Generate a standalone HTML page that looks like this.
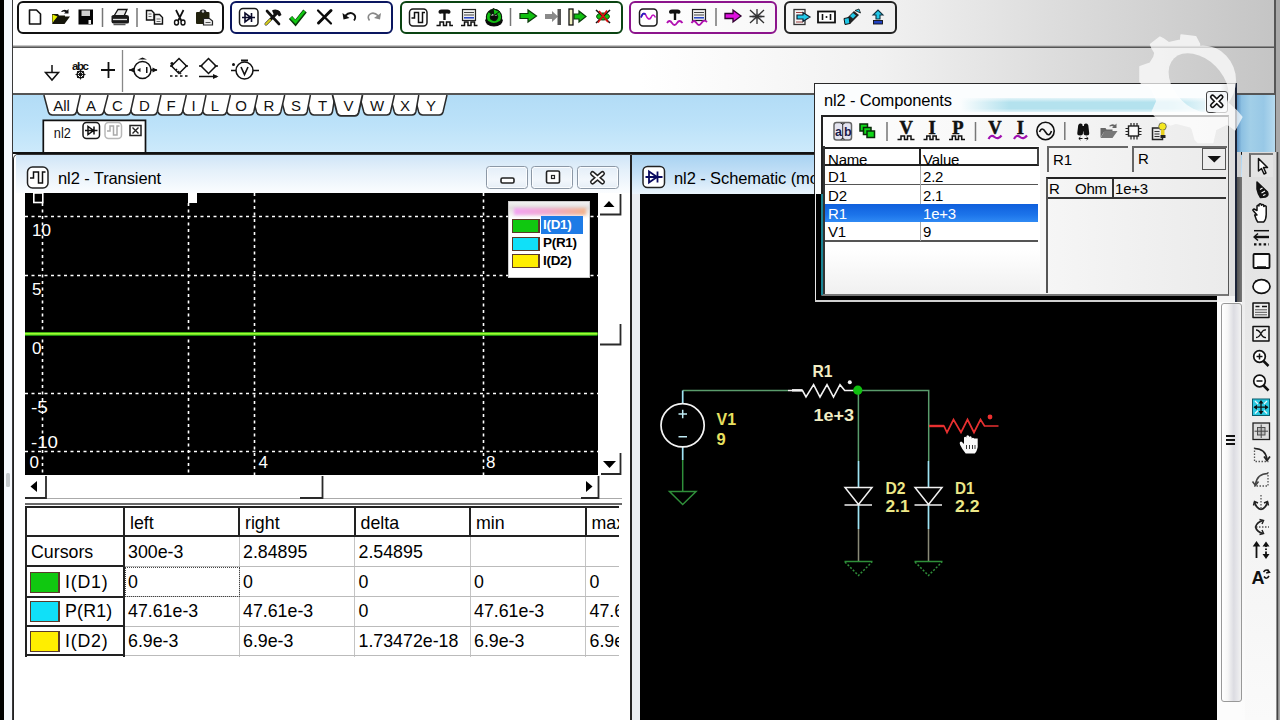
<!DOCTYPE html>
<html>
<head>
<meta charset="utf-8">
<title>nl2</title>
<style>
*{box-sizing:border-box;margin:0;padding:0}
html,body{width:1280px;height:720px;overflow:hidden;background:#fff}
body{position:relative;font-family:"Liberation Sans",sans-serif;color:#000}
.a{position:absolute}
.t{position:absolute;white-space:nowrap;line-height:1}
.tbx{position:absolute;top:1px;height:33px;border:2px solid #111;border-radius:6px;background:transparent}
svg{position:absolute;left:0;top:0;overflow:visible}

.wb{top:165.500px;width:42px;height:23.500px;border:1.300px solid #8c98a6;border-radius:3.500px;background:linear-gradient(to bottom,#e4eef8,#f2f7fc 60%,#e6eef6);box-shadow:inset 0 0 0 1px rgba(255,255,255,0.8)}
.sbb{background:#fff;border-right:2px solid #333;border-bottom:2px solid #333}
.sw{width:28px;height:14px;border:1px solid #5a3a2a;border-right-width:2px}
.lg{font-size:13.500px;font-weight:bold;letter-spacing:-0.3px}
.tc{font-size:17.8px}
.cl{font-size:15px;letter-spacing:-0.2px}
</style>
</head>
<body>
<!-- ===== top chrome backgrounds ===== -->
<div class="a" style="left:0;top:0;width:1280px;height:153px;background:linear-gradient(to right,#fff 0,#fff 640px,#f1f1f1 880px,#dcdcdc 1060px,#c4c4c4 1280px)"></div>
<!-- separator between toolbars -->
<div class="a" style="left:12px;top:44.500px;width:1264px;height:3.500px;background:linear-gradient(to bottom,#e0e0e0,#9a9a9a 45%,#3a3a3a 75%,#8a8a8a)"></div>
<!-- tab strip -->
<div class="a" id="tabstrip" style="left:13px;top:95px;width:1262px;height:58px;background:linear-gradient(to bottom,#b2dcf6,#bce2f9 50%,#cdeafb)"></div>
<div class="a" style="left:12px;top:93px;width:1264px;height:2px;background:#555"></div>
<div class="a" style="left:12px;top:151.500px;width:1264px;height:2.500px;background:#111"></div>
<!-- left edge -->
<div class="a" style="left:0;top:0;width:3.500px;height:720px;background:#000"></div>
<div class="a" style="left:3.500px;top:0;width:8.500px;height:720px;background:#f6f9fd"></div>
<div class="a" style="left:11.500px;top:0;width:1.800px;height:720px;background:#3a3a3a"></div>
<div class="a" style="left:6px;top:473px;width:3.500px;height:14px;background:#c4c8cc;border-radius:1.500px"></div>
<!-- right edge -->
<div class="a" style="left:1274px;top:0;width:2px;height:155px;background:#555"></div>
<div class="a" style="left:1276px;top:0;width:4px;height:720px;background:#a8a8a8"></div>

<!-- ===== toolbar boxes ===== -->
<div class="tbx" style="left:17px;width:207px"></div>
<div class="tbx" style="left:230px;width:163px;border-color:#0a1660"></div>
<div class="tbx" style="left:400px;width:223px;border-color:#0a4412"></div>
<div class="tbx" style="left:629px;width:148px;border-color:#8c148c"></div>
<div class="tbx" style="left:784px;width:113px;border-color:#222"></div>


<!-- ===== top toolbar icons ===== -->
<svg width="1280" height="720" viewBox="0 0 1280 720">
<g fill="none" stroke="#777" stroke-width="1.500"><path d="M102.500 8V27M137 8V27M510.500 8V26M716 8V26"/></g>
<!-- new -->
<path d="M29.500 10h7l4 4v10h-11z" fill="#fff" stroke="#111" stroke-width="1.600" stroke-linejoin="round"/>
<!-- open -->
<path d="M52 14h6l1 1.500h6v3h-10l-3 5z" fill="#1a1a08"/>
<path d="M52 24l4-7.500h14l-5.500 7.500z" fill="#15150a"/>
<path d="M52.500 14.500l0 8 5-6z" fill="#e8f000"/>
<path d="M61 11.500q3-3 6-1l1.500-1.500v4.500h-4.500l1.500-1.500q-2-1-3.500 0z" fill="#111"/>
<!-- save -->
<rect x="78.500" y="9.500" width="14.500" height="15" fill="#050505"/>
<rect x="81.500" y="10.500" width="8.500" height="5.500" fill="#cfcfcf"/>
<rect x="88.500" y="20" width="2.500" height="4" fill="#eee"/>
<!-- print -->
<path d="M114 16l4-6.500h9l-3 6.500z" fill="#e8e8e8" stroke="#111" stroke-width="1.300"/>
<path d="M111.500 16.500q0-1.500 2-1.500h13q2.500 0 2.500 2v5q0 1.500-2 1.500h-13.500q-2 0-2-2z" fill="#1a1a1a"/>
<path d="M113 19.500h14" stroke="#ddd" stroke-width="1.300"/>
<path d="M113.500 24.500h12" stroke="#555" stroke-width="1.500"/>
<!-- copy -->
<path d="M146.500 10.500h5l2.500 2.500v7h-7.500z" fill="#f4f4f4" stroke="#111" stroke-width="1.400"/>
<path d="M154.500 14.500h5l3 3v6.500h-8z" fill="#f4f4f4" stroke="#111" stroke-width="1.400"/>
<path d="M148.500 14h3M148.500 16.500h3M156.500 19h4M156.500 21.500h4" stroke="#666" stroke-width="1"/>
<!-- cut -->
<path d="M176 10l5.500 11M183.500 10l-5.500 11" stroke="#111" stroke-width="1.700" fill="none"/>
<ellipse cx="176.500" cy="22.500" rx="2" ry="2.500" fill="#fff" stroke="#111" stroke-width="1.400"/>
<ellipse cx="183" cy="22.500" rx="2" ry="2.500" fill="#fff" stroke="#111" stroke-width="1.400"/>
<!-- paste -->
<rect x="196" y="12" width="13.500" height="12" rx="1" fill="#22220e"/>
<path d="M199.500 12.500q0-3 3.500-3t3.500 3z" fill="#222"/>
<circle cx="203" cy="11.500" r="1.200" fill="#ccc"/>
<path d="M203.500 18.500h6l3 2.500v4h-9z" fill="#eee" stroke="#222" stroke-width="1.200"/>
<path d="M205.500 22.500h5" stroke="#555" stroke-width="1"/>

<!-- box2: diode -->
<rect x="239.500" y="8.500" width="18.500" height="17.500" rx="3.500" fill="#fff" stroke="#1a1a1a" stroke-width="1.500"/>
<path d="M242 17.500h13M245 13v9l6-4.500zM251.500 13v9" fill="none" stroke="#0a0a2a" stroke-width="1.600"/>
<!-- tools -->
<path d="M266 24l12-12" stroke="#111" stroke-width="3" stroke-linecap="round"/>
<path d="M266 24l4-4" stroke="#d8d020" stroke-width="2" stroke-linecap="round"/>
<path d="M267 11l12 13" stroke="#111" stroke-width="2.600" stroke-linecap="round"/>
<path d="M272 10.500q4-2.500 8 1l1.500 3.500-2.500 1.500-2-2.500-3 1z" fill="#111"/>
<!-- check -->
<path d="M290.500 17.500l5 5.500 9.500-12" fill="none" stroke="#0a3a0a" stroke-width="4.500" stroke-linejoin="miter"/>
<path d="M291 17.500l4.500 4.500 9-11" fill="none" stroke="#12c812" stroke-width="2.600"/>
<!-- X -->
<path d="M318 10.500l13 13" stroke="#0a0a0a" stroke-width="2.200" stroke-linecap="round"/>
<path d="M331 10.500l-12.500 12.500" stroke="#0a0a0a" stroke-width="3" stroke-linecap="round"/>
<!-- undo -->
<path d="M345 16q5-5 9-1.500 2.500 2.500 0 6" fill="none" stroke="#111" stroke-width="1.800"/>
<path d="M342.500 13l1 6.500 6-1.500z" fill="#111"/>
<!-- redo -->
<path d="M378.500 16q-5-5-9-1.500-2.500 2.500 0 6" fill="none" stroke="#888" stroke-width="1.600"/>
<path d="M381 13l-1 6.500-6-1.500z" fill="#888"/>

<!-- box3 -->
<rect x="409.500" y="9" width="17.500" height="17" rx="3.500" fill="#fff" stroke="#1a1a1a" stroke-width="1.500"/>
<path d="M411.500 18h3v-5.500h4v10h4v-10h2.500" fill="none" stroke="#111" stroke-width="1.500"/>
<!-- T wave -->
<path d="M438.500 12q0-2.500 3-2.500h6q3 0 3 2.500t-3 1.500h-6q-3 1-3-1.500z" fill="#111"/>
<path d="M444.500 12v8" stroke="#111" stroke-width="2.400"/>
<path d="M436.500 25.500h3.500v-3.500h3.500v3.500h3v-3.500h3.500v3.500h3" fill="none" stroke="#111" stroke-width="1.500"/>
<!-- list wave -->
<rect x="462.500" y="9.500" width="13" height="11" fill="#f0f0f0" stroke="#222" stroke-width="1.200"/>
<path d="M464 12.500h10M464 15h10" stroke="#444" stroke-width="1.100"/>
<path d="M464 17.800h10" stroke="#1030c0" stroke-width="1.400"/>
<path d="M461 25.500h3.500v-3.500h3.500v3.500h3v-3.500h3.500v3.500h3" fill="none" stroke="#111" stroke-width="1.500"/>
<!-- green cycle -->
<ellipse cx="494" cy="20.500" rx="8.800" ry="5.300" fill="#0a0a0a"/>
<circle cx="494" cy="17" r="5.600" fill="none" stroke="#0a1a0a" stroke-width="5.200"/>
<circle cx="494" cy="17" r="5.600" fill="none" stroke="#12c012" stroke-width="3" stroke-dasharray="27 8.200" transform="rotate(-60 494 17)"/>
<path d="M493 8.500l6.500 3-5.500 4z" fill="#12c012" stroke="#0a1a0a" stroke-width="1"/>
<path d="M487.500 22.500q6.500 4.500 13 0" fill="none" stroke="#0a0a0a" stroke-width="3.500"/>
<!-- green arrow -->
<path d="M520 13.500h8v-3.500l8.500 6-8.500 6v-3.500h-8z" fill="#10c010" stroke="#0a3a0a" stroke-width="1.200"/>
<!-- gray arrow + bar -->
<path d="M545 14h7v-3l6 5.500-6 5.500v-3h-7z" fill="#8a8a8a"/>
<rect x="557.500" y="9" width="3.500" height="16" fill="#555"/>
<!-- bar + green arrow -->
<rect x="569" y="9" width="4" height="16" fill="#f0f0c0" stroke="#111" stroke-width="1.300"/>
<path d="M574 14h5v-3l7 5.500-7 5.500v-3h-5z" fill="#10c010" stroke="#0a3a0a" stroke-width="1.200"/>
<!-- bug red x -->
<ellipse cx="603" cy="16.500" rx="6.500" ry="3.500" fill="#10c010" stroke="#0a3a0a" stroke-width="1"/>
<path d="M596 10l14 13M610 10l-14 13" stroke="#111" stroke-width="1.600"/>
<path d="M599 11l9 11" stroke="#e01010" stroke-width="1.800"/>
<path d="M607 10.500l-9 12" stroke="#e01010" stroke-width="1.500"/>

<!-- box4 -->
<rect x="639.500" y="9" width="17.500" height="17" rx="3.500" fill="#fff" stroke="#1a1a1a" stroke-width="1.500"/>
<path d="M641 17.500q2-6 4.500-3 3 7 5.500 3 2-5 4.500 0" fill="none" stroke="#c010c0" stroke-width="1.600"/>
<path d="M641 17.500q2-6 4.500-3" fill="none" stroke="#2020c0" stroke-width="1.600"/>
<path d="M669 12q0-2.500 3-2.500h5.500q3 0 3 2.500t-3 1.500h-5.500q-3 1-3-1.500z" fill="#111"/>
<path d="M675 12v8" stroke="#111" stroke-width="2.400"/>
<path d="M667 23q2.500-4 5 0t5 0 5.500 0" fill="none" stroke="#b010b0" stroke-width="1.800"/>
<rect x="692.500" y="9.500" width="13" height="11" fill="#f0f0f0" stroke="#222" stroke-width="1.200"/>
<path d="M694 12.500h10M694 15h10" stroke="#444" stroke-width="1.100"/>
<path d="M694 17.800h10" stroke="#1030c0" stroke-width="1.400"/>
<path d="M691.500 23q2.500-4 5 0t5 0 5.500-1" fill="none" stroke="#b010b0" stroke-width="1.800"/>
<path d="M725 13.500h8v-3.500l8 6-8 6v-3.500h-8z" fill="#e010e0" stroke="#300030" stroke-width="1.300"/>
<ellipse cx="757" cy="16.500" rx="5" ry="3" fill="#b0b0b8"/>
<path d="M750 10l14 13M764 10l-14 13M757 9v15M749.500 16.500h15" stroke="#333" stroke-width="1.300"/>

<!-- box5 -->
<rect x="794" y="9.500" width="11" height="15" fill="#f4f4f4" stroke="#333" stroke-width="1.300"/>
<path d="M796 12.500h7M796 22h7" stroke="#a04040" stroke-width="1"/>
<path d="M797 15h6v-2.500l7 4.500-7 4.500v-2.500h-6z" fill="#20c8e8" stroke="#102030" stroke-width="1.200"/>
<rect x="818" y="11.500" width="17" height="11" fill="#fff" stroke="#111" stroke-width="1.800"/>
<path d="M822.500 14v6M830.500 14v6" stroke="#111" stroke-width="1.600"/>
<circle cx="826.500" cy="17" r="1" fill="#111"/>
<path d="M845 20l9-9 5 4-9 9z" fill="#222"/>
<path d="M844 18.500l5-1 1 6-5 1z" fill="#20c8e8" stroke="#111" stroke-width="1"/>
<path d="M850 16l3-3 3 2.500-3 3z" fill="#20c8e8"/>
<path d="M855 10.500l4-1.500 1.500 4z" fill="#20c8e8" stroke="#111" stroke-width="0.800"/>
<path d="M873 14h3v-4h4v4h3l-5 5z" fill="#20c8e8" stroke="#103040" stroke-width="1.100" transform="rotate(180 878 14.500)"/>
<rect x="873.500" y="20.500" width="9" height="3.500" fill="#2040c0" stroke="#111" stroke-width="0.900"/>
</svg>
<!-- tabs -->
<svg width="1280" height="720" viewBox="0 0 1280 720">
<path d="M414.2 95L418.7 112Q419.7 115 422.7 115L439.2 115Q442.2 115 443.0 112L447.0 95" fill="#fff" stroke="#2a2a2a" stroke-width="1.5"/>
<path d="M389.8 95L394.3 112Q395.3 115 398.3 115L412.0 115Q415.0 115 415.8 112L418.8 95" fill="#fff" stroke="#2a2a2a" stroke-width="1.5"/>
<path d="M359.3 95L363.8 112Q364.8 115 367.8 115L386.7 115Q389.7 115 390.5 112L394.4 95" fill="#fff" stroke="#2a2a2a" stroke-width="1.5"/>
<path d="M305.5 95L310.0 112Q311.0 115 314.0 115L328.6 115Q331.6 115 332.4 112L335.0 95" fill="#fff" stroke="#2a2a2a" stroke-width="1.5"/>
<path d="M280.1 95L284.6 112Q285.6 115 288.6 115L303.3 115Q306.3 115 307.1 112L310.4 95" fill="#fff" stroke="#2a2a2a" stroke-width="1.5"/>
<path d="M252.0 95L256.5 112Q257.5 115 260.5 115L277.0 115Q280.0 115 280.8 112L284.7 95" fill="#fff" stroke="#2a2a2a" stroke-width="1.5"/>
<path d="M222.5 95L227.0 112Q228.0 115 231.0 115L250.0 115Q253.0 115 253.8 112L257.5 95" fill="#fff" stroke="#2a2a2a" stroke-width="1.5"/>
<path d="M198.5 95L203.0 112Q204.0 115 207.0 115L222.7 115Q225.7 115 226.5 112L230.4 95" fill="#fff" stroke="#2a2a2a" stroke-width="1.5"/>
<path d="M178.9 95L183.4 112Q184.4 115 187.4 115L198.7 115Q201.7 115 202.5 112L206.0 95" fill="#fff" stroke="#2a2a2a" stroke-width="1.5"/>
<path d="M153.5 95L158.0 112Q159.0 115 162.0 115L178.6 115Q181.6 115 182.4 112L186.3 95" fill="#fff" stroke="#2a2a2a" stroke-width="1.5"/>
<path d="M126.8 95L131.3 112Q132.3 115 135.3 115L153.3 115Q156.3 115 157.1 112L161.0 95" fill="#fff" stroke="#2a2a2a" stroke-width="1.5"/>
<path d="M100.1 95L104.6 112Q105.6 115 108.6 115L126.7 115Q129.7 115 130.5 112L134.3 95" fill="#fff" stroke="#2a2a2a" stroke-width="1.5"/>
<path d="M73.0 95L77.5 112Q78.5 115 81.5 115L99.8 115Q102.8 115 103.6 112L108.0 95" fill="#fff" stroke="#2a2a2a" stroke-width="1.5"/>
<path d="M43.9 95L48.4 112Q49.4 115 52.4 115L72.6 115Q75.6 115 76.4 112L80.3 95" fill="#fff" stroke="#2a2a2a" stroke-width="1.5"/>
<path d="M332.5 95L337.0 112.8Q338.0 115.8 341.0 115.8L354.8 115.8Q357.8 115.8 358.6 112.8L362.5 95" fill="#fff" stroke="#2a2a2a" stroke-width="1.8"/>
<g font-family="Liberation Sans, sans-serif" style="font-size:15px" text-anchor="middle" fill="#111">
<text x="61.5" y="111">All</text><text x="91" y="111">A</text><text x="117.5" y="111">C</text><text x="144.5" y="111">D</text><text x="171" y="111">F</text><text x="193.5" y="111">I</text><text x="215" y="111">L</text><text x="241" y="111">O</text><text x="269" y="111">R</text><text x="296" y="111">S</text><text x="322.5" y="111">T</text><text x="348.5" y="111">V</text><text x="377" y="111">W</text><text x="405" y="111">X</text><text x="431" y="111">Y</text>
</g>
<path d="M43.300 152V120.300H145.500V152" fill="#fff" stroke="#111" stroke-width="1.700"/>
<text x="53.800" y="138" font-family="Liberation Sans, sans-serif" style="font-size:15px" fill="#111" textLength="17" lengthAdjust="spacingAndGlyphs">nl2</text>
<rect x="83" y="122.500" width="16.500" height="16" rx="3.500" fill="#fff" stroke="#1a1a1a" stroke-width="1.500"/>
<path d="M85 130.500h12.500M88 126.500v8l5.500-4zM94 126.500v8" fill="none" stroke="#111" stroke-width="1.500"/>
<rect x="105" y="122.500" width="16.500" height="16" rx="3.500" fill="#fff" stroke="#b8b8b8" stroke-width="1.500"/>
<path d="M107 131h3v-5h3.500v9h3.500v-9h2.500" fill="none" stroke="#aaa" stroke-width="1.500"/>
<rect x="130" y="125.500" width="11" height="10" fill="#fff" stroke="#222" stroke-width="1.500"/>
<path d="M132.500 127.500l6 6M138.500 127.500l-6 6" stroke="#222" stroke-width="1.400"/>
<!-- toolbar 2 -->
<path d="M122.500 50V92" stroke="#888" stroke-width="1.300"/>
<g fill="none" stroke="#111" stroke-width="1.500">
<path d="M52 65v7.500M45.500 72.500h13l-6.500 7.500z" fill="#fff"/>
<path d="M101 70h14M108.500 62v16" stroke-width="1.800"/>
<circle cx="142.500" cy="70" r="8.500" fill="#fff"/>
<path d="M129 70h5M151 70h6"/>
<path d="M179 58.500l7.500 7.500-7.500 7.500-7.500-7.500z" fill="#fff"/>
<path d="M170 66h3M185 66h3"/>
<path d="M170 76h18" stroke-dasharray="2.500 2.500"/>
<path d="M176 69l5 5" stroke-dasharray="1.500 1.500"/>
<path d="M208.500 58.500l7.500 7.500-7.500 7.500-7.500-7.500z" fill="#fff"/>
<path d="M199 66h3.500M214.500 66h3.500"/>
<path d="M199 76.500h18"/>
<circle cx="244.500" cy="70.500" r="8.500" fill="#fff"/>
<path d="M231 70.500h5M253 70.500h6"/>
<path d="M241 67l3.500 7.500 3.500-7.500" stroke-width="1.600"/>
<path d="M241 60.500h7" stroke-width="2"/>
</g>
<g fill="#111">
<path d="M129 70l5-2.500v5zM157.500 70l-5-2.500v5z"/>
<path d="M137 70l3.500-2v4z"/><rect x="146" y="67" width="1.500" height="6"/>
<circle cx="172" cy="63.500" r="1.600"/><circle cx="233.500" cy="64.500" r="1.500"/>
<path d="M218.500 76.500l-5.500-2.500v5z"/>
<path d="M138 59.500l4.500-2 4.500 2z" />
</g>
<text x="72" y="70" font-family="Liberation Sans, sans-serif" style="font-size:11.500px;font-weight:bold" fill="#111" textLength="17">abc</text>
<circle cx="80.500" cy="74.500" r="3.300" fill="#fff" stroke="#111" stroke-width="1.400"/>
<circle cx="80.500" cy="74.500" r="1.200" fill="#111"/>
<path d="M80.500 69.500v10M75.500 74.500h10M77 71l7 7M84 71l-7 7" stroke="#111" stroke-width="0.900"/>
</svg>
<!-- MDI area placeholder -->
<div class="a" id="mdi" style="left:14px;top:154px;width:1262px;height:566px;background:#fff"></div>


<!-- ===== Transient window ===== -->
<div class="a" style="left:13px;top:154px;width:619px;height:566px;background:#fff;border-left:1.800px solid #222;border-right:2px solid #222;border-top:1px solid #333;border-top-left-radius:5px"></div>
<div class="a" style="left:16px;top:155px;width:614px;height:38px;background:linear-gradient(to bottom,#cfe5f7 0,#e4f0fa 40%,#fbfdff 100%)"></div>
<div class="t" style="left:58px;top:170px;font-size:16.500px;letter-spacing:-0.1px">nl2 - Transient</div>
<!-- window buttons -->
<div class="a wb" style="left:486px"></div><div class="a wb" style="left:531px"></div><div class="a wb" style="left:577px"></div>
<!-- plot -->
<div class="a" style="left:25px;top:193px;width:573px;height:282px;background:#000"></div>
<!-- vscroll -->
<div class="a" style="left:598px;top:193px;width:24px;height:282px;background:#fff"></div>
<!-- hscroll -->
<div class="a" style="left:25px;top:498px;width:597px;height:1px;background:#aaa"></div>
<div class="a" style="left:25px;top:503px;width:597px;height:1.500px;background:#6a6a6a"></div>
<!-- table -->
<div class="a" id="tbl" style="left:25px;top:506px;width:594px;height:151px;overflow:hidden">

<div class="a" style="left:0;top:0;width:594px;height:2px;background:#222"></div>
<div class="a" style="left:0;top:0;width:2px;height:151px;background:#222"></div>
<div class="a" style="left:0;top:29px;width:594px;height:2px;background:#222"></div>
<div class="a" style="left:98px;top:0;width:2px;height:151px;background:#222"></div>
<div class="a" style="left:213px;top:0;width:2px;height:31px;background:#222"></div>
<div class="a" style="left:329px;top:0;width:2px;height:31px;background:#222"></div>
<div class="a" style="left:444px;top:0;width:2px;height:31px;background:#222"></div>
<div class="a" style="left:560px;top:0;width:2px;height:31px;background:#222"></div>
<div class="a" style="left:214px;top:31px;width:1px;height:120px;background:#c4c4c4"></div>
<div class="a" style="left:329px;top:31px;width:1px;height:120px;background:#c4c4c4"></div>
<div class="a" style="left:445px;top:31px;width:1px;height:120px;background:#c4c4c4"></div>
<div class="a" style="left:560px;top:31px;width:1px;height:120px;background:#c4c4c4"></div>
<div class="a" style="left:100px;top:60px;width:494px;height:1px;background:#bbb"></div>
<div class="a" style="left:100px;top:90px;width:494px;height:1px;background:#bbb"></div>
<div class="a" style="left:100px;top:120px;width:494px;height:1px;background:#bbb"></div>
<div class="a" style="left:100px;top:149px;width:494px;height:1px;background:#bbb"></div>
<div class="a" style="left:0;top:59px;width:100px;height:2px;background:#222"></div>
<div class="a" style="left:0;top:90px;width:100px;height:2px;background:#222"></div>
<div class="a" style="left:0;top:119px;width:100px;height:2px;background:#222"></div>
<div class="a" style="left:0;top:148px;width:100px;height:2px;background:#222"></div>
<div class="a" style="left:100px;top:61px;width:115px;height:30px;border:1px dotted #444"></div>
<div class="t tc" style="left:105px;top:8.5px">left</div>
<div class="t tc" style="left:220px;top:8.5px">right</div>
<div class="t tc" style="left:335.5px;top:8.5px">delta</div>
<div class="t tc" style="left:451px;top:8.5px">min</div>
<div class="t tc" style="left:566.5px;top:8.5px">max</div>
<div class="t tc" style="left:6px;top:38px">Cursors</div>
<div class="t tc" style="left:103px;top:38px">300e-3</div>
<div class="t tc" style="left:218px;top:38px">2.84895</div>
<div class="t tc" style="left:333.5px;top:38px">2.54895</div>
<div class="a" style="left:5px;top:66px;width:30px;height:21px;background:#10c810;border:1px solid #5a3a2a;border-right-width:2px"></div>
<div class="t tc" style="left:40px;top:68px;letter-spacing:0.8px">I(D1)</div>
<div class="t tc" style="left:103px;top:68px">0</div>
<div class="t tc" style="left:218px;top:68px">0</div>
<div class="t tc" style="left:333.5px;top:68px">0</div>
<div class="t tc" style="left:449px;top:68px">0</div>
<div class="t tc" style="left:564.5px;top:68px">0</div>
<div class="a" style="left:5px;top:95px;width:30px;height:21px;background:#10e0f8;border:1px solid #5a3a2a;border-right-width:2px"></div>
<div class="t tc" style="left:40px;top:97px;letter-spacing:0.2px">P(R1)</div>
<div class="t tc" style="left:103px;top:97px">47.61e-3</div>
<div class="t tc" style="left:218px;top:97px">47.61e-3</div>
<div class="t tc" style="left:333.5px;top:97px">0</div>
<div class="t tc" style="left:449px;top:97px">47.61e-3</div>
<div class="t tc" style="left:564.5px;top:97px">47.61e-3</div>
<div class="a" style="left:5px;top:125px;width:30px;height:21px;background:#ffee00;border:1px solid #5a3a2a;border-right-width:2px"></div>
<div class="t tc" style="left:40px;top:127px;letter-spacing:0.8px">I(D2)</div>
<div class="t tc" style="left:103px;top:127px">6.9e-3</div>
<div class="t tc" style="left:218px;top:127px">6.9e-3</div>
<div class="t tc" style="left:333.5px;top:127px">1.73472e-18</div>
<div class="t tc" style="left:449px;top:127px">6.9e-3</div>
<div class="t tc" style="left:564.5px;top:127px">6.9e-3</div>
</div>

<!-- plot overlay -->
<svg width="1280" height="720" viewBox="0 0 1280 720">
<g stroke="#fff" stroke-width="1.6" stroke-dasharray="3 3.5" fill="none">
<path d="M25 216.5H598M25 275.5H598M25 393.5H598M25 451.5H598"/>
<path d="M42.5 203V475M188.5 203V475M254.5 193V475M483.5 193V475"/>
</g>
<path d="M25 334H597.500" stroke="#1c8c0c" stroke-width="4"/>
<path d="M25 333.8H597.500" stroke="#9cff30" stroke-width="2"/>
<rect x="33.8" y="193" width="9" height="9.5" fill="none" stroke="#fff" stroke-width="1.6"/>
<rect x="188" y="193" width="9" height="10" fill="#fff"/>
<g fill="#fff" font-family="Liberation Sans, sans-serif" font-size="17" style="font-size:17px">
<text x="32" y="236" textLength="19" lengthAdjust="spacingAndGlyphs">10</text>
<text x="32" y="295">5</text>
<text x="32" y="354">0</text>
<text x="31" y="413" textLength="17" lengthAdjust="spacingAndGlyphs">-5</text>
<text x="31" y="448" textLength="27" lengthAdjust="spacingAndGlyphs">-10</text>
<text x="29.5" y="468">0</text>
<text x="258.5" y="468">4</text>
<text x="486" y="468">8</text>
</g>
<!-- scrollbar 3d edges -->
<g fill="none" stroke="#2a2a2a" stroke-width="1.800">
<path d="M620.500 194V214.500H600"/>
<path d="M620.500 324V344.500H600"/>
<path d="M620.500 453V474H601"/>
<path d="M46 476V498H25"/>
<path d="M322.500 476V498H300"/>
<path d="M598.500 476V498H581"/>
</g>
<!-- scroll arrows -->
<path d="M603.500 207l5.500-6 5.500 6z" fill="#000"/>
<path d="M603 461h13l-6.5 7z" fill="#000"/>
<path d="M37 481v11l-6.5-5.5z" fill="#000"/>
<path d="M586 481v11l6.500-5.5z" fill="#000"/>
<!-- title icon transient -->
<rect x="27.5" y="167" width="20.500" height="21" rx="5" fill="#fff" stroke="#222" stroke-width="1.500"/>
<path d="M30 178h3.500v-6h5v11h4v-11h3" fill="none" stroke="#111" stroke-width="1.500"/>
<!-- window button glyphs -->
<rect x="501" y="178" width="13" height="5" rx="1.500" fill="#fff" stroke="#222" stroke-width="1.600"/>
<rect x="546.500" y="171" width="13" height="12" rx="1.500" fill="#fff" stroke="#222" stroke-width="1.600"/>
<rect x="551.500" y="175.500" width="3" height="3" fill="#fff" stroke="#222" stroke-width="1.200"/>
<path d="M592.500 173.500l10 8.500M602.500 173.500l-10 8.500" stroke="#222" stroke-width="5" stroke-linecap="round"/>
<path d="M592.500 173.500l10 8.500M602.500 173.500l-10 8.500" stroke="#fff" stroke-width="2" stroke-linecap="round"/>
</svg>
<!-- legend -->
<div class="a" style="left:507.500px;top:200.500px;width:82.500px;height:77.500px;background:linear-gradient(to bottom,#f2f2f2 0,#e2dede 6px,#fff 17px);border:1px solid #ccc"></div>
<div class="a" style="left:514px;top:208px;width:72px;height:7px;background:linear-gradient(to right,#f2a4f2,#f0a8d0 45%,#f2b48c);filter:blur(1.800px)"></div>
<div class="a" style="left:541px;top:216px;width:42px;height:18px;background:#1e7be6"></div>
<div class="a sw" style="left:512px;top:219px;background:#10c810"></div>
<div class="a sw" style="left:512px;top:237px;background:#10e0f8"></div>
<div class="a sw" style="left:512px;top:254px;background:#ffee00"></div>
<div class="t lg" style="left:543px;top:218px;color:#fff">I(D1)</div>
<div class="t lg" style="left:543px;top:236px">P(R1)</div>
<div class="t lg" style="left:543px;top:254px">I(D2)</div>

<!-- ===== Schematic window ===== -->
<div class="a" style="left:632px;top:154px;width:613px;height:566px;background:#e9edf1;border-top:1px solid #333"></div>
<div class="a" style="left:632px;top:155px;width:613px;height:39px;background:linear-gradient(to bottom,#a8d3f2 0,#c2dff6 45%,#eaf4fc 100%)"></div>
<div class="t" style="left:674px;top:170px;font-size:16.500px;letter-spacing:-0.1px">nl2 - Schematic (mo</div>
<div class="a" style="left:640px;top:194px;width:577px;height:526px;background:#000"></div>
<!-- schematic vscroll -->
<div class="a" style="left:1216.500px;top:194px;width:25px;height:526px;background:#fcfcfc"></div>
<div class="a" style="left:1220.500px;top:303px;width:21px;height:399px;border:1.500px solid #989898;border-radius:3px;background:linear-gradient(to right,#fff 0,#f6f6f6 30%,#dcdce2 62%,#e6e6ea 80%,#f2f2f2 100%)"></div>
<div class="a" style="left:1226px;top:435px;width:9px;height:2px;background:#111;box-shadow:0 4px 0 #111,0 8px 0 #111"></div>
<div class="a" style="left:1241.500px;top:152px;width:4px;height:568px;background:linear-gradient(to bottom,#dcdcdc 0,#efefef 30%,#fcfcfc 100%)"></div>
<!-- right toolbar -->
<div class="a" style="left:1245px;top:152px;width:31px;height:568px;background:linear-gradient(to bottom,#dcdcdc 0,#e6e6e6 25%,#f2f2f2 60%,#fafafa 100%)"></div>
<div class="a" style="left:1249px;top:153px;width:24px;height:24px;background:#e4e4e4;border-left:2px solid #666;border-top:2px solid #777"></div>
<svg width="1280" height="720" viewBox="0 0 1280 720">
<!-- title icon -->
<rect x="643" y="166.500" width="21.500" height="21" rx="4.500" fill="#fff" stroke="#222" stroke-width="1.500"/>
<path d="M645.500 177h17M649 171.500v11l8-5.500zM657.500 171.500v11" fill="none" stroke="#0a0a60" stroke-width="1.800"/>
<!-- circuit -->
<g fill="none" stroke-width="1.500" stroke-linecap="butt">
<path d="M682.700 390.500H788M858 390.500H928.700V461M858.400 394V461" stroke="#5a9c6c"/>
<path d="M682.700 460V491M669.500 491.500H696L682.700 504.500Z" stroke="#2f8f3a"/>
<path d="M858.500 529V561M928.500 529V561" stroke="#8a8a78"/>
<path d="M844.500 561.500H872.500M914.500 561.500H942.500" stroke="#2f8f3a"/>
<path d="M845 562L858.500 575.500L872 562M915 562L928.500 575.500L942 562" stroke="#2f8f3a" stroke-dasharray="2 1.700"/>
<path d="M682.700 390.500V404M682.700 447V460M858.500 461V487M858.500 505V529M928.500 461V487M928.500 505V529" stroke="#9fe4f4" stroke-width="1.700"/>
<circle cx="682.600" cy="425.300" r="21.600" stroke="#f4f4f4" stroke-width="1.700"/>
<path d="M678.500 414h8.500M682.700 409.700v8.600M678.500 436.800h8.500" stroke="#bfeaf4" stroke-width="1.500"/>
<path d="M788 390.500H802.500L806 397L813.600 384.700L820 397L827 384.700L833.500 397L840 384.700L844.700 390.500H854" stroke="#f2f2f2" stroke-width="1.600"/>
<path d="M792 390.300H802.500" stroke="#f2f2f2" stroke-width="2.400"/>
<path d="M845 487.500H872L858.500 504.500ZM844.500 505H872M915 487.500H942L928.500 504.500ZM914.500 505H942" stroke="#f0f0f0" stroke-width="1.500"/>
<path d="M929 426H944L947 432.500L953.500 419.500L961 432.500L967.500 419.500L974 432.500L980.500 419.500L984.500 426H998.500" stroke="#e83030" stroke-width="1.700"/>
<path d="M929 426H944" stroke="#e83030" stroke-width="2.400"/>
</g>
<circle cx="857.800" cy="390.200" r="4.600" fill="#10c010"/>
<circle cx="849.800" cy="382.300" r="2" fill="#f4f4f4"/>
<circle cx="990" cy="417" r="2.400" fill="#ec3030"/>
<g font-family="Liberation Sans, sans-serif" style="font-size:16.500px;font-weight:bold" fill="#ece888">
<text x="812.500" y="377" fill="#f2eec4" textLength="20" lengthAdjust="spacingAndGlyphs">R1</text>
<text x="813.500" y="421" fill="#f2eec4" textLength="40.500" lengthAdjust="spacingAndGlyphs">1e+3</text>
<text x="716.500" y="425" fill="#e8e060" textLength="19.500" lengthAdjust="spacingAndGlyphs">V1</text>
<text x="716.500" y="445" fill="#e8e060">9</text>
<text x="885.500" y="494" textLength="20" lengthAdjust="spacingAndGlyphs">D2</text>
<text x="885.500" y="512" textLength="24" lengthAdjust="spacingAndGlyphs">2.1</text>
<text x="955" y="494" textLength="19.500" lengthAdjust="spacingAndGlyphs">D1</text>
<text x="955" y="512" textLength="24.500" lengthAdjust="spacingAndGlyphs">2.2</text>
</g>
<!-- hand cursor -->
<path d="M961.500 441.500l2.500 2.500v-6.500q1.200-1.600 2.400 0v-1.500q1.300-1.600 2.600 0v1q1.300-1.500 2.600 0v1.500q1.300-1.500 2.600 0l3.500 0v8.500q-1 5-3 6.500h-9q-3.500-4-5.500-8.500q-1.500-3.500 1.500-3.500z" fill="#fafafa"/>
<path d="M966.500 445v4M969.500 445v4M972.500 445v4M975 445v4" stroke="#222" stroke-width="0.900"/>
</svg>

<!-- ===== Components window ===== -->
<div class="a" style="left:1237px;top:95px;width:38px;height:57px;background:linear-gradient(to right,#5a90c0,#8cc0e2 12%,#a2cfe8 35%,#98c8e6 70%,#b6daee)"></div>
<div class="a" style="left:1235px;top:152px;width:6px;height:26px;background:#cfcfcf"></div>
<div class="a" style="left:1235px;top:177px;width:6.500px;height:125px;background:linear-gradient(to right,#444,#5c5c5c 50%,#787878)"></div>

<div class="a" style="left:814px;top:82.500px;width:423px;height:219px;background:linear-gradient(to right,#fbfdfe 0,#fbfdfe 405px,#dedede 416px);border-top:1.500px solid #2a2a2a;border-left:1.500px solid #2a2a2a;border-right:2px solid #1c2438"></div>
<div class="a" style="left:816.500px;top:194px;width:400.500px;height:106px;background:#000"></div>
<div class="a" style="left:814px;top:194px;width:2.500px;height:107.500px;background:linear-gradient(to right,#000 0,#000 0.800px,#e8e8e8 0.800px,#e8e8e8 2.300px,#000 2.300px)"></div>
<div class="a" style="left:815px;top:300.300px;width:402px;height:1.400px;background:#d0d0d0"></div>
<div class="a" style="left:1217px;top:296px;width:18px;height:6px;background:#f4f4f4"></div>
<div class="a" style="left:960px;top:98px;width:245px;height:14px;background:linear-gradient(to right,rgba(176,224,236,0),#b4e2ee 20%,#b4e2ee 85%,rgba(176,224,236,0.3));"></div>
<div class="a" style="left:960px;top:96px;width:245px;height:18px;background:linear-gradient(to bottom,#fbfdfe,rgba(251,253,254,0) 35%,rgba(251,253,254,0) 70%,#fbfdfe)"></div>
<div class="t" style="left:824px;top:92px;font-size:16.500px;letter-spacing:-0.15px">nl2 - Components</div>
<!-- close btn -->
<div class="a" style="left:1206px;top:91px;width:22px;height:22px;border:1.500px solid #444;border-radius:3px;background:#f4f6f8"></div>
<!-- inner panel -->
<div class="a" style="left:820.500px;top:114.500px;width:408.500px;height:181.500px;background:linear-gradient(to right,#fdfdfd 0,#f7f7f7 50%,#ebebeb 100%);border:2px solid #222;border-right:1.500px solid #555;border-bottom:2.500px solid #777"></div>
<div class="a" style="left:820.500px;top:194px;width:2.200px;height:101px;background:#1a8494"></div>
<!-- list -->
<div class="a" style="left:823px;top:146px;width:217px;height:148px;background:linear-gradient(to bottom,#fff 70%,#f0f0f0);border-left:2px solid #333"></div>
<div class="a" style="left:825px;top:147px;width:214px;height:19px;border-top:2px solid #222;border-bottom:2px solid #222;border-right:2px solid #444"></div>
<div class="a" style="left:919px;top:147px;width:2px;height:19px;background:#222"></div>
<div class="a" style="left:825px;top:184px;width:213px;height:1px;background:#555"></div>
<div class="a" style="left:825px;top:240px;width:213px;height:1.500px;background:#555"></div>
<div class="a" style="left:920px;top:166px;width:1px;height:75px;background:#aaa"></div>
<div class="a" style="left:825px;top:204px;width:213px;height:18px;background:linear-gradient(to bottom,#0f5fdc,#1c74ea 60%,#2f8af4)"></div>
<div class="t cl" style="left:828px;top:151.500px">Name</div><div class="t cl" style="left:923px;top:151.500px">Value</div>
<div class="t cl" style="left:828px;top:169px">D1</div><div class="t cl" style="left:923px;top:169px">2.2</div>
<div class="t cl" style="left:828px;top:188px">D2</div><div class="t cl" style="left:923px;top:188px">2.1</div>
<div class="t cl" style="left:828px;top:206px;color:#fff">R1</div><div class="t cl" style="left:923px;top:206px;color:#fff">1e+3</div>
<div class="t cl" style="left:828px;top:224px">V1</div><div class="t cl" style="left:923px;top:224px">9</div>
<!-- right side -->
<div class="a" style="left:1047px;top:146px;width:81px;height:26px;border-left:2px solid #666;border-top:2px solid #666"></div>
<div class="a" style="left:1132px;top:146px;width:95px;height:26px;border-left:2px solid #666;border-top:2px solid #666"></div>
<div class="a" style="left:1202px;top:148px;width:24px;height:22px;border:1.500px solid #555;background:#ededed"></div>
<div class="t cl" style="left:1053px;top:152px">R1</div><div class="t cl" style="left:1138px;top:151px">R</div>
<div class="a" style="left:1046px;top:177px;width:180px;height:116px;border-left:2px solid #555;border-top:2px solid #222"></div>
<div class="a" style="left:1048px;top:197px;width:178px;height:1.500px;background:#333"></div>
<div class="a" style="left:1112px;top:179px;width:1.500px;height:19px;background:#333"></div>
<div class="t cl" style="left:1049px;top:181px">R</div><div class="t cl" style="left:1075px;top:181px">Ohm</div><div class="t cl" style="left:1115px;top:181px">1e+3</div>

<!-- components icons -->
<svg width="1280" height="720" viewBox="0 0 1280 720">
<path d="M887 122V141M975.500 122V141M1064.800 122V140" stroke="#777" stroke-width="1.500"/>
<rect x="834" y="122.500" width="17.500" height="17.500" rx="2.500" fill="#e4e4f0" stroke="#666" stroke-width="1.500"/>
<g font-family="Liberation Sans, sans-serif" style="font-size:12.500px;font-weight:bold" fill="#1a1a4a"><text x="835" y="136">a</text><text x="844" y="136">b</text></g>
<path d="M842.700 123.500v15.500M840.700 123.300q2 0 2 1.500q0-1.500 2-1.500M840.700 139.300q2 0 2-1.500q0 1.500 2 1.500" fill="none" stroke="#333" stroke-width="1"/>
<g fill="#10d818" stroke="#0a2a0a" stroke-width="1.500"><rect x="860" y="124" width="7.500" height="7"/><rect x="863.500" y="127.500" width="7.500" height="7"/><rect x="867" y="131" width="7.500" height="6.500"/></g>
<g font-family="Liberation Serif, serif" style="font-size:18.500px;font-weight:bold" fill="#111" stroke="#111" stroke-width="0.500" text-anchor="middle">
<text x="906.300" y="133.500">V</text><text x="932" y="133.500">I</text><text x="958" y="133.500">P</text>
<text x="995" y="133.500">V</text><text x="1020.300" y="133.500">I</text></g>
<g fill="none" stroke="#111" stroke-width="1.500">
<path d="M897.500 139.500h3.500v-3.500h3.500v3.500h3v-3.500h3.500v3.500h3.500"/>
<path d="M923.500 139.500h3.300v-3.500h3.200v3.500h3v-3.500h3.200v3.500h3.300"/>
<path d="M949 139.500h3.300v-3.500h3.200v3.500h3v-3.500h3.200v3.500h3.300"/>
<circle cx="1045.500" cy="131" r="8.700" stroke-width="1.600"/>
<path d="M1039.500 132q2.500-6 6 0t6-1" stroke-width="1.600"/>
</g>
<path d="M988.500 139q2.500-5 6-2t7-1.500" fill="none" stroke="#a010b0" stroke-width="2.200"/>
<path d="M1014 139q2.500-5 6-2t7-1.500" fill="none" stroke="#a010b0" stroke-width="2.200"/>
<!-- binoculars -->
<path d="M1078 127q0-3.500 2.500-3.500t2 2.500h1.500q-.5-2.500 2-2.500t2.500 3.500l.7 6q.3 2.500-2.700 2.500t-3-2.500v-1.500h-.5v1.500q0 2.500-3 2.500t-2.700-2.500z" fill="#111"/>
<path d="M1079 138.500h3.500M1080.500 137l-1.700 1.500 1.700 1.500M1084.500 138.500h3.500M1086.500 137l1.700 1.500-1.700 1.500" stroke="#111" stroke-width="1" fill="none"/>
<!-- folder gray -->
<path d="M1100.500 128h5l1 1.500h6v3h-9l-3 5z" fill="#666"/>
<path d="M1100.500 138l4-7h13l-5 7z" fill="#777"/>
<path d="M1109 126q3-3 6-1l1.500-1.500v4.500h-4.500l1.500-1.500q-2-1-3.500 0z" fill="#666"/>
<!-- chip -->
<rect x="1128.500" y="126" width="10" height="10" fill="#fafafa" stroke="#222" stroke-width="1.400"/>
<path d="M1131 123v3M1134 123v3M1137 123v3M1131 136v3.500M1134 136v3.500M1137 136v3.500M1125.500 128.500h3M1125.500 131.500h3M1125.500 134.500h3M1138.500 128.500h3M1138.500 131.500h3M1138.500 134.500h3" stroke="#222" stroke-width="1.200"/>
<!-- info -->
<rect x="1152.500" y="128" width="10" height="11.500" fill="#e8e8e8" stroke="#222" stroke-width="1.500"/>
<path d="M1154.500 131.500h5M1154.500 134h5M1154.500 136.500h5" stroke="#333" stroke-width="1"/>
<circle cx="1162.500" cy="126.500" r="3.800" fill="#f4e820" stroke="#555" stroke-width="0.800"/>
<rect x="1161" y="130" width="3.500" height="5" fill="#e8d020"/><rect x="1160.500" y="135" width="5" height="3" fill="#222"/>
<!-- close glyph -->
<path d="M1212.500 97l8.500 8.500M1221 97l-8.500 8.500" stroke="#111" stroke-width="5.200" stroke-linecap="round"/>
<path d="M1212.500 97l8.500 8.500M1221 97l-8.500 8.500" stroke="#fff" stroke-width="1.800" stroke-linecap="round"/>
<!-- dropdown arrow -->
<path d="M1207.500 156h13.500l-6.700 6.500z" fill="#111"/>
</svg>

<!-- right toolbar icons -->
<svg width="1280" height="720" viewBox="0 0 1280 720">
<path d="M1277.500 152V720" stroke="#444" stroke-width="1.500"/>
<g fill="none" stroke="#111" stroke-width="1.500" stroke-linejoin="round">
<path d="M1258.500 158.500v12.500l3-2.500 2.500 5.500 2-1-2.500-5.500h4z" fill="#fff"/>
<path d="M1257 182L1267.500 192Q1269 196 1265.500 197L1260.500 197.500Q1258 194 1257 189Z" fill="#111"/><path d="M1260 189.500l2.500-1.500M1261.500 193l3.500-2M1263 195.500l2.500-1" stroke="#fff" stroke-width="1.100"/>
<path d="M1257 215l-3.500-4q-1.500-1 .5-2l3 1.500v-4.500q1-1.500 2 0v-1.500q1.200-1.500 2.400 0v.800q1.200-1.500 2.400 0v1.200q1.300-1.300 2.400 0v8q0 5-2.500 7.500h-6q-1.500-2-3-7z" fill="#fff"/>
<path d="M1254 230.700h15" stroke-width="1.500"/><path d="M1255 237h14" stroke-width="2.400"/><path d="M1258 233.500l-4 3.500 4 3.500" stroke-width="1.500"/>
<path d="M1254 244.300h15" stroke-width="2.200" stroke-dasharray="2.500 2.300"/>
<rect x="1253.500" y="254" width="16" height="14" rx="1" stroke-width="1.800" fill="#fff"/><path d="M1257 267.500h9" stroke-width="2.500"/>
<ellipse cx="1261.500" cy="286.500" rx="8.500" ry="6.800" fill="#fff" stroke-width="1.700"/>
<path d="M1255.500 280.500l1 1.500M1267 280.500l-1 1.500" stroke-width="1.500"/>
<rect x="1253" y="303" width="16" height="14.500" fill="#eee" stroke-width="1.500"/>
<path d="M1255.500 306.500h4M1262 306.500h5" stroke-width="1.300"/><path d="M1255 309.800h12M1255 312.300h12M1255 314.800h12" stroke-width="0.900" stroke="#444"/>
<rect x="1253" y="326.500" width="16" height="14.500" fill="#eee" stroke-width="1.500"/>
<path d="M1256 330q3 0 5 4t5 3.500M1256 337.500q3 0 5-4t5-3.500" stroke-width="1.300"/>
<circle cx="1259.500" cy="356.500" r="5.800" fill="#fff" stroke-width="1.700"/><path d="M1263.500 361l5 5" stroke-width="2.500"/><path d="M1256.500 356.500h6M1259.500 353.500v6" stroke-width="1.500"/>
<circle cx="1259.500" cy="381" r="5.800" fill="#fff" stroke-width="1.700"/><path d="M1263.500 385.500l5 5" stroke-width="2.500"/><path d="M1256.500 381h6" stroke-width="1.500"/>
</g>
<rect x="1252.500" y="399" width="17" height="16.500" fill="#28c8e0" stroke="#0a5a6a" stroke-width="1"/>
<path d="M1261 401v12.500M1254.500 407.200h13" stroke="#111" stroke-width="1.300"/>
<path d="M1261 400l-2.500 3.500h5zM1261 414.500l-2.500-3.500h5zM1253.500 407.200l3.500-2.500v5zM1268.500 407.200l-3.500-2.500v5z" fill="#111"/>
<path d="M1255 401l3 3M1267 401l-3 3M1255 413.500l3-3M1267 413.500l-3-3" stroke="#e8f8fc" stroke-width="1.300"/>
<rect x="1253" y="423" width="16.500" height="16.500" fill="#ddd" stroke="#222" stroke-width="1.300"/>
<rect x="1257.500" y="427.500" width="7.500" height="7.500" fill="#bbb" stroke="#444" stroke-width="0.900"/>
<path d="M1261.200 424.500v13.500M1254.500 431.200h13.500" stroke="#444" stroke-width="1"/>
<g fill="none" stroke="#555" stroke-width="1.300">
<path d="M1254.500 447.500v14h14" stroke-dasharray="1.500 1.500"/><path d="M1254.500 448.500q11 0 12.500 11" stroke="#222" stroke-width="1.700"/><path d="M1264 456.500l3 4 3-4" stroke="#222" stroke-width="1.700"/>
<path d="M1268 472v14h-14" stroke-dasharray="1.500 1.500"/><path d="M1268 473.500q-11 0-12.500 11" stroke="#444" stroke-width="1.600"/><path d="M1252.500 481.500l3 4 3-4" stroke="#444" stroke-width="1.600"/>
<path d="M1261 495v14" stroke-dasharray="1.500 1.500"/><path d="M1254.500 502q1.500 6 6.500 7.500M1267.500 502q-1.500 6-6.500 7.500" stroke="#222" stroke-width="1.800"/><path d="M1253.500 505.500l1-4 3.500 1.500M1268.500 505.500l-1-4-3.500 1.500" stroke="#222" stroke-width="1.500"/>
<path d="M1256 527h13" stroke-dasharray="1.500 1.500"/><path d="M1263 520.500q-6 1.500-7.500 6.500M1263 533.500q-6-1.500-7.500-6.500" stroke="#222" stroke-width="1.800"/><path d="M1259.500 519.500l4 1-1.500 3.500M1259.500 534.500l4-1-1.500-3.500" stroke="#222" stroke-width="1.500"/>
</g>
<path d="M1256.500 543v15M1266 544v12" stroke="#111" stroke-width="1.800"/>
<path d="M1256.500 541l-3.800 5.500h7.600zM1266 559l-3.500-5h7zM1266 541.500l-3.500 5h7z" fill="#111"/>
<path d="M1266 547v6" stroke="#e8e8e8" stroke-width="2.200" stroke-dasharray="1.500 1.500"/>
<text x="1251.500" y="583.500" font-family="Liberation Sans, sans-serif" style="font-size:18px;font-weight:bold" fill="#111">A</text>
<path d="M1263.500 572q3-4 5.500 0M1267.500 569.500l2 2.800-3.300.8M1264 576.500q2.500 3.500 5-.5" fill="none" stroke="#111" stroke-width="1.500"/>
</svg>

<!-- watermark -->
<svg width="1280" height="720" viewBox="0 0 1280 720">
<defs>
<mask id="hole"><rect x="1100" y="0" width="180" height="180" fill="#fff"/><ellipse cx="1198.600" cy="83.200" rx="24" ry="35" transform="rotate(-45 1198.600 83.200)" fill="#000"/></mask>
</defs>
<g opacity="0.72" mask="url(#hole)">
<path d="M1199.4 43.9L1195.6 36.7L1181.1 35L1180.6 40.6L1178.9 40.6L1168.9 42.8L1163.3 38.9L1160 37.2L1150.6 44.4L1152.2 48.3L1155 52.8L1153.9 57.2L1150 63.3L1140 66.7L1140 81.7L1142.2 83.9L1148.9 85.6L1151.7 89.4L1155 96.1L1157 101L1152.4 111.3L1154.3 115.1L1159.2 120L1170.8 124.9L1175.7 123L1190.3 126.8L1192.2 128.8L1195.2 139.5L1198 142.4L1212.7 142.4L1215.6 129.7L1227.2 123.9L1235 129.7L1241.8 117.1L1236 110.3L1202 80Z" fill="#fff" stroke="#fff" stroke-width="1.500" stroke-linejoin="round"/>
<ellipse cx="1202.800" cy="80.400" rx="33.200" ry="35" fill="#fff"/>
</g>
</svg>
</body>
</html>
